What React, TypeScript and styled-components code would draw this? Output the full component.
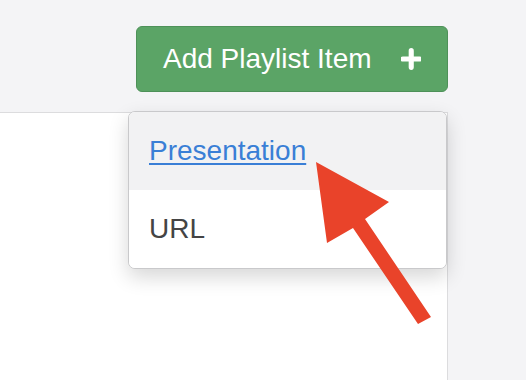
import React from 'react';
import styled, { createGlobalStyle } from 'styled-components';

const GlobalStyle = createGlobalStyle`
  html, body {
    margin: 0;
    padding: 0;
    background: #f4f4f6;
    font-family: "Liberation Sans", Arial, sans-serif;
    overflow: hidden;
  }
`;

const Page = styled.div`
  position: relative;
  width: 526px;
  height: 380px;
  display: flex;
  flex-direction: column;
`;

const Header = styled.div`
  height: 112px;
  box-sizing: border-box;
  display: flex;
  justify-content: flex-end;
  align-items: flex-start;
  padding: 26px 78px 0 0;
`;

const Panel = styled.div`
  flex: 1;
  width: 448px;
  box-sizing: border-box;
  background: #fff;
  border-top: 1px solid #dcdcde;
  border-right: 1px solid #dcdcde;
`;

const ButtonWrap = styled.div`
  position: relative;
`;

const AddButton = styled.button`
  width: 312px;
  height: 66px;
  box-sizing: border-box;
  display: flex;
  align-items: center;
  padding: 0 26px;
  gap: 29px;
  background: #5ba466;
  border: 1px solid #4e9159;
  border-radius: 6px;
  color: #fff;
  font-family: inherit;
  font-size: 28px;
  white-space: nowrap;
  cursor: pointer;
`;

const Menu = styled.ul`
  position: absolute;
  top: 85px;
  right: 1px;
  width: 317px;
  margin: 0;
  padding: 0;
  list-style: none;
  background: #fff;
  border: 1px solid #c9c9cb;
  border-radius: 7px;
  overflow: hidden;
  box-shadow: 0 8px 20px rgba(0, 0, 0, 0.16);
  z-index: 2;
`;

const MenuItem = styled.li<{ $active?: boolean }>`
  height: 78px;
  display: flex;
  align-items: center;
  padding-left: 20px;
  font-size: 28px;
  background: ${p => (p.$active ? '#f2f2f3' : '#fff')};
  color: #444;
`;

const MenuLink = styled.a`
  color: #3a7fd6;
  text-decoration: underline;
  text-underline-offset: 3px;
  text-decoration-thickness: 2px;
`;

const Arrow = styled.svg`
  position: absolute;
  left: 0;
  top: 0;
  pointer-events: none;
  z-index: 3;
`;

const PlusIcon = () => (
  <svg width="22" height="22" viewBox="0 0 22 22">
    <path d="M11 2v18M2 11h18" stroke="#fff" strokeWidth="5.5" strokeLinecap="round" />
  </svg>
);

export default function App() {
  return (
    <>
      <GlobalStyle />
      <Page>
        <Header>
          <ButtonWrap>
            <AddButton>
              Add Playlist Item
              <PlusIcon />
            </AddButton>
            <Menu>
              <MenuItem $active>
                <MenuLink href="#">Presentation</MenuLink>
              </MenuItem>
              <MenuItem>URL</MenuItem>
            </Menu>
          </ButtonWrap>
        </Header>
        <Panel />
        <Arrow width="526" height="380" viewBox="0 0 526 380">
          <polygon points="316,162 389,202 365,219 431,317 418,324 353,228 327,243" fill="#e9432a" />
        </Arrow>
      </Page>
    </>
  );
}
